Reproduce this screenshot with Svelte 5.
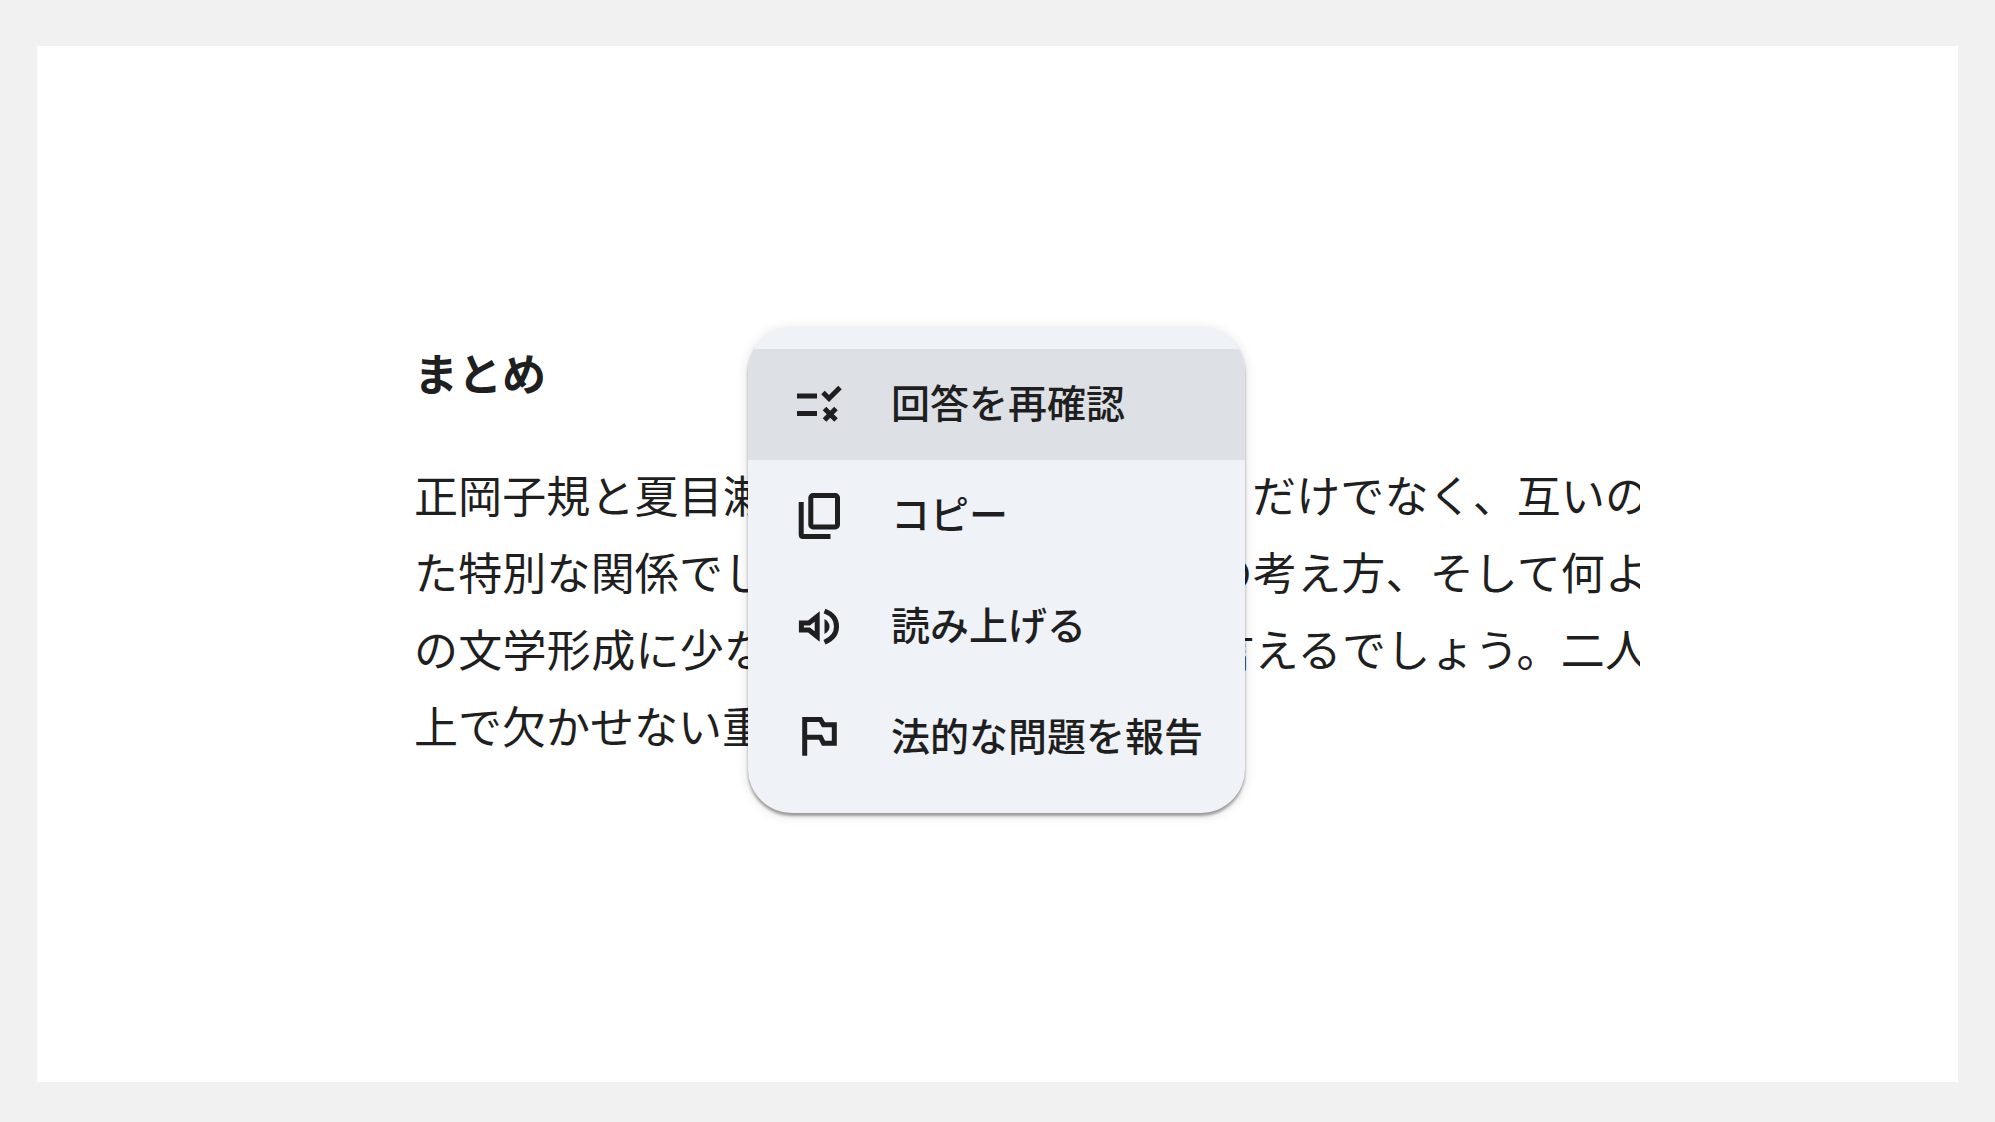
<script>
  const lines = [
    '正岡子規と夏目漱石は、単なる友人というだけでなく、互いの',
    'た特別な関係でした。互いの人生や文学の考え方、そして何よ',
    'の文学形成に少なからず影響を与えたと言えるでしょう。二人',
    '上で欠かせない重要な存在でした。'
  ];

  const items = [
    { icon: 'check', label: '回答を再確認' },
    { icon: 'copy', label: 'コピー' },
    { icon: 'speak', label: '読み上げる' },
    { icon: 'flag', label: '法的な問題を報告' }
  ];

  let active = $state('check');
</script>

<main class="page">
  <section class="sheet">
    <div class="answer">
      <article class="text">
        <h2>まとめ</h2>
        <p>
          {#each lines as line}<span class="line">{line}</span>{/each}
        </p>
      </article>

      <div class="menu" role="menu">
        {#each items as item}
          <button
            type="button"
            role="menuitem"
            class="item"
            class:active={active === item.icon}
            onmouseenter={() => (active = item.icon)}
          >
            <svg class="icon" viewBox="0 0 56 56" aria-hidden="true">
              {#if item.icon === 'check'}
                <path d="M6 19H26M6 36.5H26" />
                <path d="M32 15.5L38 21.5L49 10.5" />
                <path d="M33.5 31.5L45 43M45 31.5L33.5 43" />
              {:else if item.icon === 'copy'}
                <rect x="19.8" y="7.5" width="26.7" height="31.5" rx="2.2" />
                <path d="M10.2 14V46.5Q10.2 48.5 12.2 48.5H39.5" />
              {:else if item.icon === 'speak'}
                <path d="M10.4 24H18L26.2 17.5V37.5L18 31H10.4Z" />
                <path class="solid" d="M33.5 20Q38.5 23 38.5 27.5T33.5 35Z" />
                <path d="M33.5 12C40 14.5 45.5 19.5 45.5 27.5S40 40.5 33.5 43.2" />
              {:else}
                <path d="M13.7 45.8V9.5H29.5L32.5 14.8H43.3V33.2H32.5L29.5 27.2H13.7" />
              {/if}
            </svg>
            <span class="label">{item.label}</span>
          </button>
        {/each}
      </div>
    </div>
  </section>
</main>

<style>
  :global(body) {
    background: #f1f1f1;
  }

  .page {
    box-sizing: border-box;
    min-height: 100vh;
    padding: 46px 37px 40px;
    display: flex;
    color: #1f1f1f;
    font-family: 'Noto Sans CJK JP', 'Noto Sans', sans-serif;
  }

  .sheet {
    flex: 1;
    min-width: 0;
    padding: 288px 318px 240px 377px;
    background: #fff;
  }

  .answer {
    position: relative;
  }

  .text {
    overflow: hidden;
    font-size: 44px;
    line-height: 77px;
  }

  h2 {
    margin: 0 0 45px;
    font-size: 44px;
    font-weight: 700;
  }

  p {
    margin: 0;
  }

  .line {
    display: block;
    width: calc(100% + 9px);
    white-space: nowrap;
    text-align: justify;
    text-align-last: justify;
  }

  .line:last-child {
    text-align-last: left;
  }

  .menu {
    position: absolute;
    top: -7px;
    left: 334px;
    padding: 22px 0 20px;
    overflow: hidden;
    border-radius: 44px;
    background: #eff3f8;
    box-shadow:
      0 3px 3px rgba(0, 0, 0, 0.36),
      0 2px 10px 3px rgba(0, 0, 0, 0.08);
  }

  .item {
    display: flex;
    align-items: center;
    gap: 44px;
    width: 100%;
    height: 111px;
    padding: 0 42px 0 43px;
    border: 0;
    background: transparent;
    color: inherit;
    font-family: inherit;
    font-size: 39px;
    font-weight: 500;
    line-height: 56px;
    text-align: left;
    white-space: nowrap;
    cursor: pointer;
  }

  .active {
    background: #dde1e6;
  }

  .label {
    padding-bottom: 8px;
  }

  .icon {
    flex: none;
    width: 56px;
    height: 56px;
    fill: none;
    stroke: currentColor;
    stroke-width: 5;
  }

  .solid {
    fill: currentColor;
    stroke: none;
  }
</style>
